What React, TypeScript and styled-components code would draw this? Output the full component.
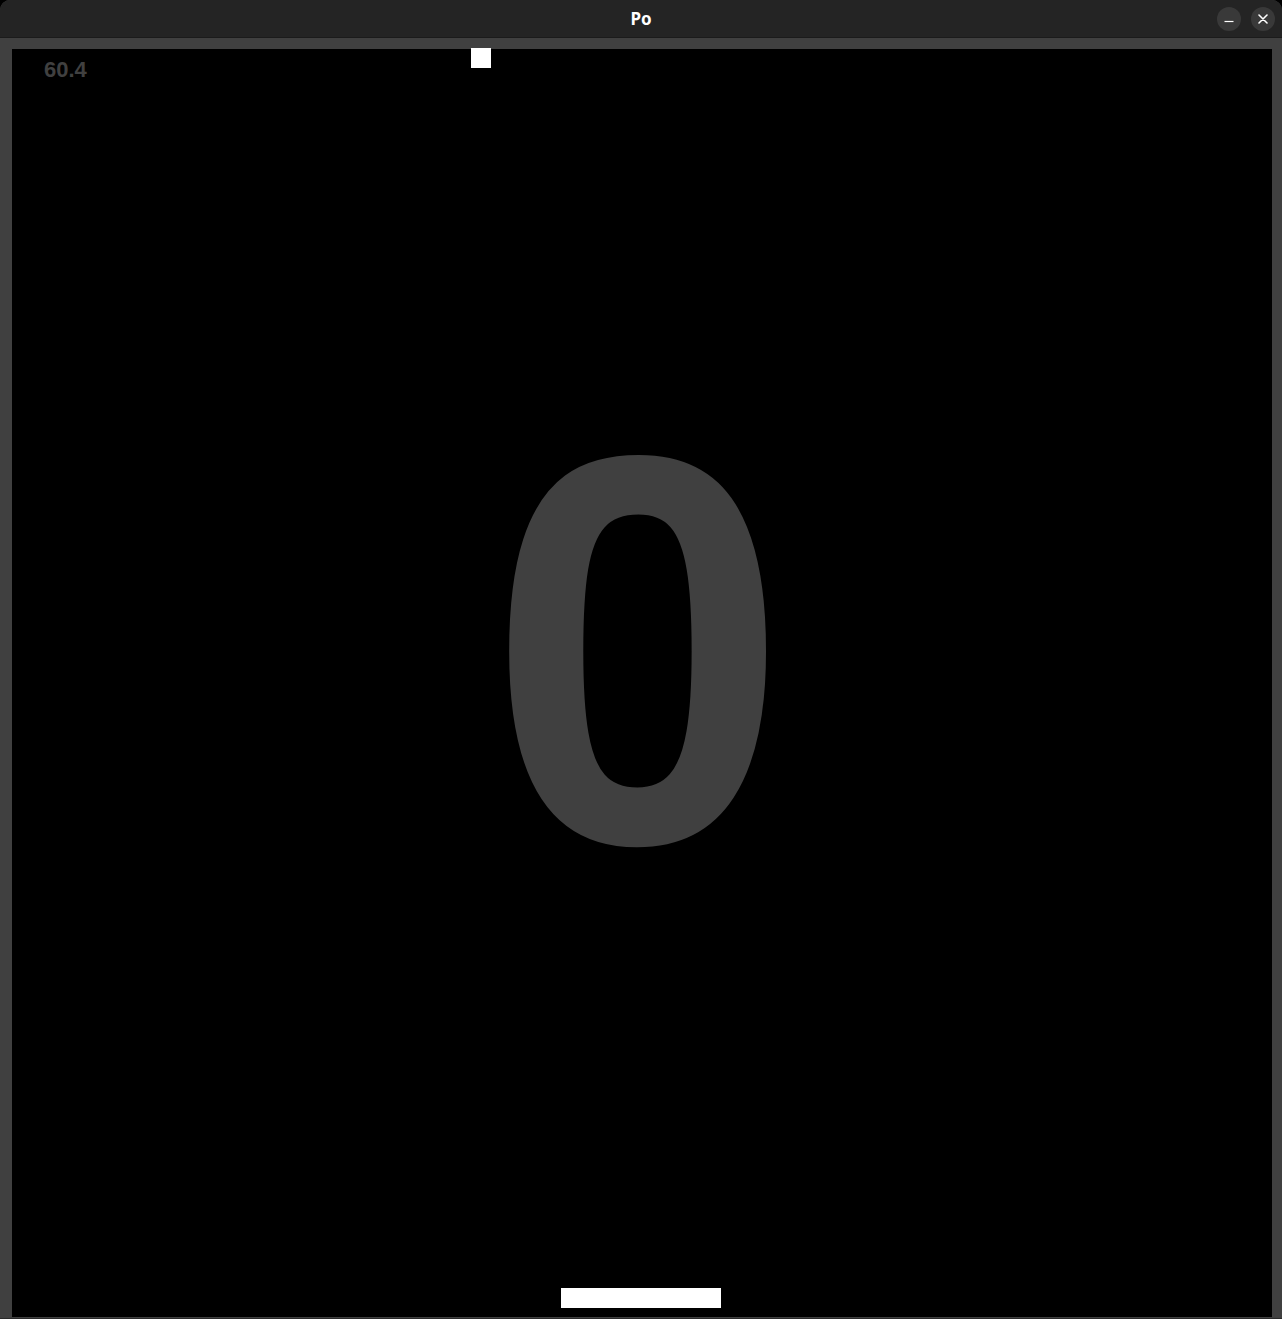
import styled, { createGlobalStyle } from "styled-components";

const GlobalStyle = createGlobalStyle`
  html, body {
    margin: 0;
    padding: 0;
    background: #000;
  }
  body {
    font-family: "Liberation Sans", Arial, sans-serif;
  }
`;

const Window = styled.div`
  width: 1282px;
  height: 1319px;
  display: flex;
  flex-direction: column;
  background: #404040;
  border-radius: 10px 10px 0 0;
  overflow: hidden;
`;

const TitleBar = styled.div`
  height: 37px;
  flex-shrink: 0;
  position: relative;
  display: flex;
  align-items: center;
  justify-content: center;
  background: #242424;
  border-bottom: 1px solid #1b1b1b;
`;

const Title = styled.span`
  font-family: "Noto Sans", "Liberation Sans", sans-serif;
  font-weight: 700;
  font-size: 17px;
  color: #fff;
`;

const Controls = styled.div`
  position: absolute;
  right: 7px;
  top: 7px;
  display: flex;
  gap: 10px;
`;

const WinButton = styled.div`
  width: 24px;
  height: 24px;
  border-radius: 50%;
  background: #393939;
  display: flex;
  align-items: center;
  justify-content: center;
`;

const Frame = styled.div`
  flex: 1;
  display: flex;
  padding: 11px 10px 1px 12px;
  background: #404040;
  border-bottom: 1px solid #2a2a2a;
  box-sizing: border-box;
`;

const Canvas = styled.div`
  flex: 1;
  position: relative;
  background: #000;
`;

const Fps = styled.div`
  position: absolute;
  left: 32px;
  top: 8px;
  font-size: 22px;
  font-weight: 700;
  color: #404040;
`;

const Score = styled.div`
  position: absolute;
  left: 0;
  right: 0;
  top: 324px;
  text-align: center;
  font-size: 540px;
  line-height: 1;
  font-weight: 700;
  color: #404040;
  padding-right: 8px;
  transform: scaleY(1.026);
  transform-origin: top center;
`;

const Block = styled.div<{ $w: number; $h: number }>`
  position: absolute;
  width: ${(p) => p.$w}px;
  height: ${(p) => p.$h}px;
  background: #fff;
`;

export default function App() {
  return (
    <>
      <GlobalStyle />
      <Window>
        <TitleBar>
          <Title>Po</Title>
          <Controls>
            <WinButton>
              <svg width="10" height="10" viewBox="0 0 10 10">
                <line x1="0.5" y1="7.5" x2="9.5" y2="7.5" stroke="#fff" strokeWidth="1.2" />
              </svg>
            </WinButton>
            <WinButton>
              <svg width="10" height="10" viewBox="0 0 10 10">
                <path d="M1 1 L9 9 M9 1 L1 9" stroke="#fff" strokeWidth="1.6" strokeLinecap="round" />
              </svg>
            </WinButton>
          </Controls>
        </TitleBar>
        <Frame>
          <Canvas>
            <Fps>60.4</Fps>
            <Score>0</Score>
            <Block $w={20} $h={20} style={{ left: 459, top: -1 }} />
            <Block $w={160} $h={20} style={{ left: 549, top: 1239 }} />
          </Canvas>
        </Frame>
      </Window>
    </>
  );
}
